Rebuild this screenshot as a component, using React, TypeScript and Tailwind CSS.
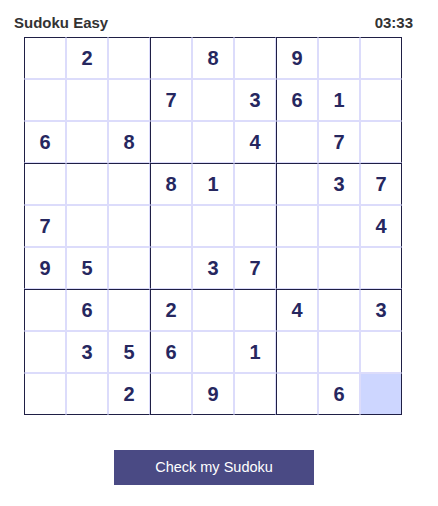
import React from "react";

const board: (number | null)[][] = [
  [null, 2, null, null, 8, null, 9, null, null],
  [null, null, null, 7, null, 3, 6, 1, null],
  [6, null, 8, null, null, 4, null, 7, null],
  [null, null, null, 8, 1, null, null, 3, 7],
  [7, null, null, null, null, null, null, null, 4],
  [9, 5, null, null, 3, 7, null, null, null],
  [null, 6, null, 2, null, null, 4, null, 3],
  [null, 3, 5, 6, null, 1, null, null, null],
  [null, null, 2, null, 9, null, null, 6, null],
];

export default function App() {
  return (
    <div className="w-[438px] h-[506px] bg-white" style={{ fontFamily: '"Liberation Sans", Arial, sans-serif' }}>
      <div className="flex justify-between pl-[14px] pr-[25px] pt-[14px] text-[15px] leading-[18px] font-bold text-[#333333]">
        <span>Sudoku Easy</span>
        <span>03:33</span>
      </div>
      <div className="ml-[24px] mt-[5px] grid grid-cols-[repeat(9,42px)] w-[378px]">
        {board.map((row, r) =>
          row.map((v, c) => {
            const hl = r === 8 && c === 8;
            return (
              <div
                key={`${r}-${c}`}
                className={[
                  "h-[42px] w-[42px] flex items-center justify-center text-[20px] font-bold text-[#26275f] border",
                  c % 3 === 0 ? "border-l-[#1f1f45]" : "border-l-[#dcdcfb]",
                  r % 3 === 0 ? "border-t-[#1f1f45]" : "border-t-[#dcdcfb]",
                  c === 8 ? "border-r-[#1f1f45]" : "border-r-[#dcdcfb]",
                  r === 8 ? "border-b-[#1f1f45]" : "border-b-[#dcdcfb]",
                  hl ? "bg-[#cdd6ff]" : "bg-white",
                ].join(" ")}
              >
                {v ?? ""}
              </div>
            );
          })
        )}
      </div>
      <div className="mt-[35px] ml-[114px]">
        <button className="w-[200px] h-[35px] bg-[#4a4a84] text-white text-[14.5px] flex items-center justify-center">
          Check my Sudoku
        </button>
      </div>
    </div>
  );
}
